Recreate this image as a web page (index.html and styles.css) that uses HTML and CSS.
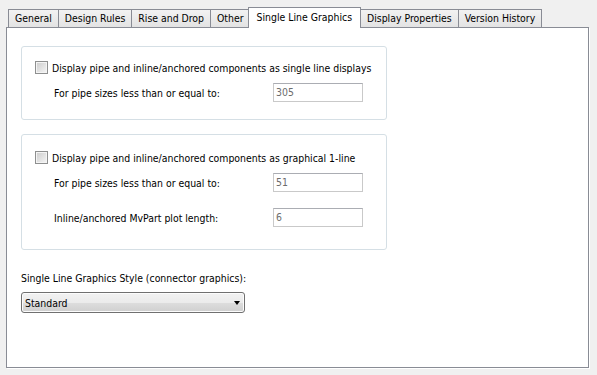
FILE: index.html
```html
<!DOCTYPE html>
<html lang="en">
<head>
    <meta charset="UTF-8">
    <title>Single Line Graphics</title>
    <link rel="stylesheet" href="styles.css">
</head>
<body>
    <div class="tabs">
        <div class="tab">General</div>
        <div class="tab">Design Rules</div>
        <div class="tab">Rise and Drop</div>
        <div class="tab">Other</div>
        <div class="tab active">Single Line Graphics</div>
        <div class="tab">Display Properties</div>
        <div class="tab">Version History</div>
    </div>

    <div class="panel">
        <div class="group group-single">
            <label class="check-row">
                <span class="checkbox"></span>
                Display pipe and inline/anchored components as single line displays
            </label>
            <div class="field-row">
                <span class="field-label">For pipe sizes less than or equal to:</span>
                <span class="textbox">305</span>
            </div>
        </div>

        <div class="group group-graphical">
            <label class="check-row">
                <span class="checkbox"></span>
                Display pipe and inline/anchored components as graphical 1-line
            </label>
            <div class="field-row">
                <span class="field-label">For pipe sizes less than or equal to:</span>
                <span class="textbox">51</span>
            </div>
            <div class="field-row second">
                <span class="field-label">Inline/anchored MvPart plot length:</span>
                <span class="textbox">6</span>
            </div>
        </div>

        <div class="style-label">Single Line Graphics Style (connector graphics):</div>
        <div class="combo">
            <span>Standard</span>
            <span class="combo-arrow"></span>
        </div>
    </div>
</body>
</html>
```

FILE: styles.css
```css
body {
    margin: 0;
    background-color: #f0f0f0;
    font-family: "DejaVu Sans Condensed", Tahoma, sans-serif;
    font-size: 10.4px;
    color: #000;
    width: 597px;
    height: 375px;
    overflow: hidden;
}

/* --- tab strip --- */
.tabs {
    display: flex;
    align-items: flex-end;
    height: 27px;
    padding-left: 8px;
    box-sizing: border-box;
    position: relative;
    z-index: 1;
}
.tab {
    height: 18px;
    line-height: 17px;
    padding: 0 6px;
    border: 1px solid #898c95;
    border-bottom: none;
    margin-right: -1px;
    background: linear-gradient(#f2f2f2, #e3e3e3);
    box-sizing: border-box;
    white-space: nowrap;
}
.tab.active {
    height: 21px;
    margin: 0 -1px -1px -2px;
    padding: 0 8px;
    line-height: 19px;
    background: #fff;
    position: relative;
}

/* --- page panel --- */
.panel {
    margin-left: 6px;
    width: 583px;
    height: 341px;
    border: 1px solid #898c95;
    background: #fff;
    box-sizing: border-box;
    padding: 18px 0 0 14px;
    box-shadow: 1px 1px 0 #fff;
}

.group {
    width: 366px;
    border: 1px solid #d5dfe5;
    border-radius: 3px;
    box-sizing: border-box;
    padding: 14px 0 0 13px;
}
.group-single {
    height: 74px;
}
.group-graphical {
    height: 116px;
    margin-top: 14px;
    padding-top: 16px;
}

.check-row {
    display: flex;
    align-items: center;
    gap: 4px;
    height: 13px;
    white-space: nowrap;
}
.checkbox {
    width: 13px;
    height: 13px;
    border: 1px solid #8e8f8f;
    box-sizing: border-box;
    background: linear-gradient(135deg, #cbcbcb, #f6f6f6);
    box-shadow: inset 0 0 0 1px #f4f4f4;
    flex: none;
}

.field-row {
    display: flex;
    align-items: center;
    margin-top: 9px;
    padding-left: 19px;
    height: 19px;
}
.field-row.second {
    margin-top: 16px;
}
.field-label {
    width: 219px;
}
.textbox {
    width: 90px;
    height: 19px;
    border: 1px solid #c9c9c9;
    border-top-color: #abadb3;
    box-sizing: border-box;
    padding-left: 2px;
    line-height: 17px;
    color: #6d6d6d;
    background: #fff;
}

.style-label {
    margin-top: 21px;
    height: 14px;
    line-height: 14px;
}
.combo {
    margin-top: 7px;
    width: 224px;
    height: 21px;
    border: 1px solid #707070;
    border-radius: 3px;
    box-sizing: border-box;
    background: linear-gradient(#f2f2f2 0%, #ebebeb 50%, #dddddd 51%, #cfcfcf 100%);
    box-shadow: inset 0 0 0 1px #fcfcfc;
    display: flex;
    align-items: center;
    justify-content: space-between;
    padding: 0 4px 0 3px;
}
.combo-arrow {
    width: 0;
    height: 0;
    border-left: 3.5px solid transparent;
    border-right: 3.5px solid transparent;
    border-top: 4px solid #000;
}
```
